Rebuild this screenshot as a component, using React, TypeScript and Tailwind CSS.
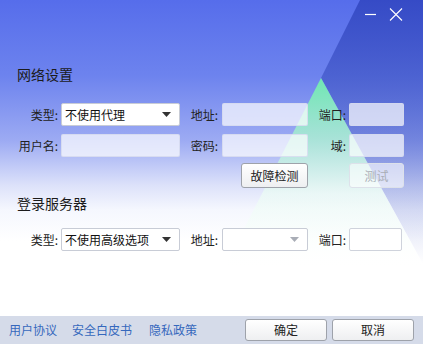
import React from "react";

function Label({ text, w }: { text: string; w: string }) {
  return <div className={`${w} shrink-0 text-right text-[12px] leading-[23px] text-[#222]`}>{text}</div>;
}

function Field({ w, solid }: { w: string; solid?: boolean }) {
  return (
    <div
      className={`${w} h-[23px] shrink-0 rounded-[2px] border ${
        solid ? "border-[#cfd3dc] bg-white" : "border-[#d3d8ee]/80 bg-white/70"
      }`}
    />
  );
}

function Select({ value, w, muted }: { value: string; w: string; muted?: boolean }) {
  return (
    <div
      className={`${w} flex h-[23px] shrink-0 items-center justify-between rounded-[2px] border border-[#c8ccd6] bg-white pl-[3px] pr-[8px] text-[12px] text-[#111]`}
    >
      <span>{value}</span>
      <svg width="9" height="5" viewBox="0 0 9 5">
        <path d="M0 0h9L4.5 5z" fill={muted ? "#a9adb6" : "#333"} />
      </svg>
    </div>
  );
}

function Btn({ text, w, h, disabled }: { text: string; w: string; h: string; disabled?: boolean }) {
  return (
    <div
      className={`${w} ${h} flex shrink-0 items-center justify-center rounded-[3px] border text-[12px] ${
        disabled
          ? "border-[#dde1ea] bg-white/60 text-[#a9aeb6]"
          : "border-[#9ea2aa] bg-[linear-gradient(180deg,#ffffff,#eeeff1)] text-[#222]"
      }`}
    >
      {text}
    </div>
  );
}

export default function App() {
  return (
    <div className="relative flex h-[344px] w-[423px] flex-col overflow-hidden bg-[linear-gradient(180deg,#566deb_0%,#6d83ee_22%,#9dabf3_41%,#dde2fa_54%,#f5f7fe_61%,#ffffff_70%)] font-['Noto_Sans_CJK_SC','Microsoft_YaHei',sans-serif]">
      <svg className="absolute inset-0" width="423" height="344" viewBox="0 0 423 344">
        <defs>
          <linearGradient id="dark" x1="0" y1="0" x2="0" y2="1">
            <stop offset="0" stopColor="#3449c4" stopOpacity="0.95" />
            <stop offset="0.4" stopColor="#4258c6" stopOpacity="0.6" />
            <stop offset="1" stopColor="#5266c8" stopOpacity="0" />
          </linearGradient>
          <linearGradient id="beam" x1="0" y1="0" x2="0" y2="1">
            <stop offset="0" stopColor="#6fe8b2" stopOpacity="1" />
            <stop offset="0.3" stopColor="#a8f1cf" stopOpacity="0.8" />
            <stop offset="0.6" stopColor="#ecfdf4" stopOpacity="0.7" />
            <stop offset="0.85" stopColor="#f8fffb" stopOpacity="0.4" />
            <stop offset="1" stopColor="#ffffff" stopOpacity="0" />
          </linearGradient>
        </defs>
        <polygon points="360,0 423,0 423,264 321,78" fill="url(#dark)" />
        <polygon points="321,78 223,270 426,270" fill="url(#beam)" />
      </svg>

      <div className="relative flex h-[28px] shrink-0 items-start justify-end">
        <svg className="mt-[8px]" width="48" height="13" viewBox="0 0 48 13">
          <path d="M0 6.5h11" stroke="#fff" strokeWidth="1.2" />
          <path d="M25 0.5l12 12M37 0.5l-12 12" stroke="#fff" strokeWidth="1.1" />
        </svg>
        <div className="w-[10px]" />
      </div>

      <div className="relative flex flex-1 flex-col">
        <div className="mt-[37px] pl-[17px] text-[14px] leading-[18px] text-[#1b1b1b]">网络设置</div>

        <div className="mt-[20px] flex items-center">
          <Label text="类型:" w="w-[58px]" />
          <div className="w-[3px]" />
          <Select value="不使用代理" w="w-[119px]" />
          <Label text="地址:" w="w-[38px]" />
          <div className="w-[4px]" />
          <Field w="w-[86px]" />
          <Label text="端口:" w="w-[38px]" />
          <div className="w-[3px]" />
          <Field w="w-[55px]" />
        </div>

        <div className="mt-[8px] flex items-center">
          <Label text="用户名:" w="w-[58px]" />
          <div className="w-[3px]" />
          <Field w="w-[119px]" />
          <Label text="密码:" w="w-[38px]" />
          <div className="w-[4px]" />
          <Field w="w-[86px]" />
          <Label text="域:" w="w-[38px]" />
          <div className="w-[3px]" />
          <Field w="w-[55px]" />
        </div>

        <div className="mt-[6px] flex pl-[241px]">
          <Btn text="故障检测" w="w-[67px]" h="h-[25px]" />
          <div className="w-[41px]" />
          <Btn text="测试" w="w-[55px]" h="h-[25px]" disabled />
        </div>

        <div className="mt-[6px] pl-[17px] text-[14px] leading-[18px] text-[#1b1b1b]">登录服务器</div>

        <div className="mt-[16px] flex items-center">
          <Label text="类型:" w="w-[58px]" />
          <div className="w-[3px]" />
          <Select value="不使用高级选项" w="w-[119px]" />
          <Label text="地址:" w="w-[38px]" />
          <div className="w-[4px]" />
          <Select value="" w="w-[86px]" muted />
          <Label text="端口:" w="w-[38px]" />
          <div className="w-[3px]" />
          <Field w="w-[53px]" solid />
        </div>
      </div>

      <div className="relative flex h-[28px] shrink-0 items-center bg-[#d5dbe9] pl-[9px] pr-[9px]">
        <span className="text-[12px] text-[#3568bd]">用户协议</span>
        <span className="ml-[15px] text-[12px] text-[#3568bd]">安全白皮书</span>
        <span className="ml-[17px] text-[12px] text-[#3568bd]">隐私政策</span>
        <div className="flex-1" />
        <Btn text="确定" w="w-[82px]" h="h-[22px]" />
        <div className="w-[5px]" />
        <Btn text="取消" w="w-[82px]" h="h-[22px]" />
      </div>
    </div>
  );
}
